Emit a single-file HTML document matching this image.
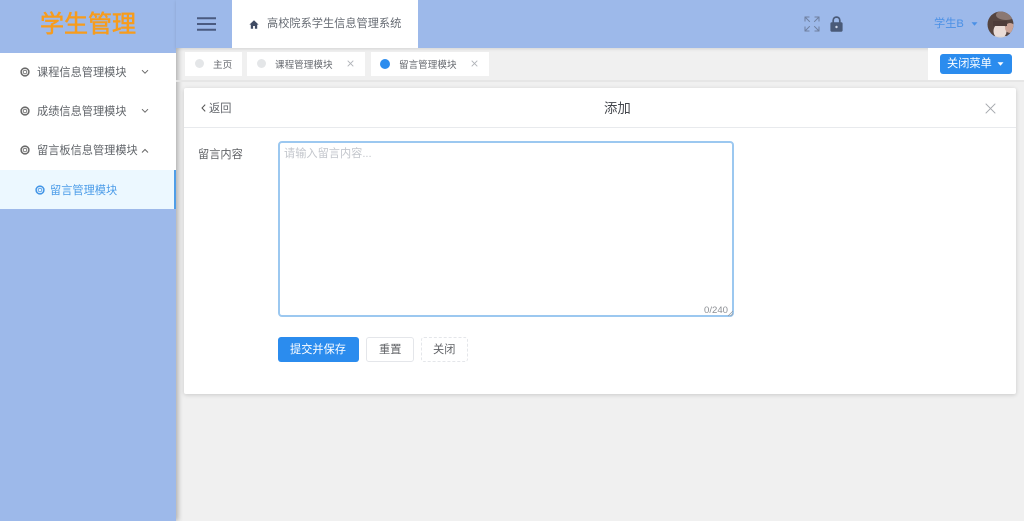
<!DOCTYPE html>
<html lang="zh">
<head>
<meta charset="utf-8">
<title>高校院系学生信息管理系统</title>
<style>
*{box-sizing:border-box}
html,body{margin:0;padding:0;width:1024px;height:521px;overflow:hidden;background:#f0f0f0;font-family:"Liberation Sans","Noto Sans CJK SC",sans-serif;color:#606266}
#w{position:absolute;left:0;top:0;width:1024px;height:521px;overflow:hidden;background:#f0f0f0;filter:blur(.35px)}
.a{position:absolute;white-space:nowrap}
.t{line-height:1;white-space:nowrap;position:absolute}
svg{position:absolute;display:block;overflow:visible}
</style>
</head>
<body>
<div id="w">
<!-- sidebar -->
<div class="a" style="left:0;top:0;width:176px;height:521px;background:#9db9ea;box-shadow:2px 0 5px rgba(0,0,0,.28)"></div>
<div class="t" style="left:40px;top:12.5px;font-size:24px;color:#f79c1c;-webkit-text-stroke:.6px #f79c1c">学生管理</div>
<div class="a" style="left:0;top:53px;width:176px;height:117px;background:#fff"></div>
<div class="a" style="left:0;top:170px;width:176px;height:39px;background:#ecf8ff;border-right:2px solid #4f9ee8"></div>

<svg style="left:20px;top:67px" width="10" height="10" viewBox="0 0 10 10"><circle cx="5" cy="5" r="3.9" fill="none" stroke="#666" stroke-width="1.5"/><circle cx="5" cy="5" r="1.8" fill="none" stroke="#777" stroke-width="1"/></svg>
<div class="t" style="left:37px;top:66px;font-size:11.2px;color:#5f6368;margin-top:1.6px">课程信息管理模块</div>
<svg style="left:141px;top:69px" width="8" height="6" viewBox="0 0 8 6"><path d="M1 1.2L4 4.2L7 1.2" fill="none" stroke="#666" stroke-width="1"/></svg>

<svg style="left:20px;top:106px" width="10" height="10" viewBox="0 0 10 10"><circle cx="5" cy="5" r="3.9" fill="none" stroke="#666" stroke-width="1.5"/><circle cx="5" cy="5" r="1.8" fill="none" stroke="#777" stroke-width="1"/></svg>
<div class="t" style="left:37px;top:105px;font-size:11.2px;color:#5f6368;margin-top:1.6px">成绩信息管理模块</div>
<svg style="left:141px;top:108px" width="8" height="6" viewBox="0 0 8 6"><path d="M1 1.2L4 4.2L7 1.2" fill="none" stroke="#666" stroke-width="1"/></svg>

<svg style="left:20px;top:145px" width="10" height="10" viewBox="0 0 10 10"><circle cx="5" cy="5" r="3.9" fill="none" stroke="#666" stroke-width="1.5"/><circle cx="5" cy="5" r="1.8" fill="none" stroke="#777" stroke-width="1"/></svg>
<div class="t" style="left:37px;top:144px;font-size:11.2px;color:#5f6368;margin-top:1.6px">留言板信息管理模块</div>
<svg style="left:141px;top:148px" width="8" height="6" viewBox="0 0 8 6"><path d="M1 4.5L4 1.5L7 4.5" fill="none" stroke="#666" stroke-width="1"/></svg>

<svg style="left:35px;top:185px" width="10" height="10" viewBox="0 0 10 10"><circle cx="5" cy="5" r="3.9" fill="none" stroke="#3f93e6" stroke-width="1.5"/><circle cx="5" cy="5" r="1.8" fill="none" stroke="#5ba2ea" stroke-width="1"/></svg>
<div class="t" style="left:50px;top:184px;font-size:11.2px;color:#4a9be8;margin-top:1.6px">留言管理模块</div>

<!-- header -->
<div class="a" style="left:176px;top:0;width:848px;height:48px;background:#9db9ea;box-shadow:0 1px 3px rgba(0,0,0,.12)"></div>
<div class="a" style="left:232px;top:0;width:186px;height:48px;background:#fff"></div>
<svg style="left:197px;top:17px" width="19" height="14" viewBox="0 0 19 14"><path d="M0 1.2H19M0 7H19M0 12.8H19" stroke="#4a5a80" stroke-width="2"/></svg>
<svg style="left:249px;top:20px" width="10" height="9" viewBox="0 0 10 9"><path d="M5 0.3L9.6 4.6H8.2V8.8H5.9V6H4.1V8.8H1.8V4.6H0.4Z" fill="#3f4a63"/></svg>
<div class="t" style="left:267px;top:19px;font-size:11.2px;color:#666b73">高校院系学生信息管理系统</div>

<svg style="left:804px;top:16px" width="16" height="16" viewBox="0 0 16 16" fill="none" stroke="#6f80a0" stroke-width="1"><path d="M1 5.5V1H5.5M1 1L5.8 5.8M15 5.5V1H10.5M15 1L10.2 5.8M1 10.5V15H5.5M1 15L5.8 10.2M15 10.5V15H10.5M15 15L10.2 10.2"/></svg>
<svg style="left:830px;top:16px" width="13" height="16" viewBox="0 0 13 16"><path d="M3.2 7V4.4C3.2 2.5 4.6 1.1 6.5 1.1S9.8 2.5 9.8 4.4V7" fill="none" stroke="#4a5a78" stroke-width="1.7"/><rect x="0.4" y="6.3" width="12.2" height="9.4" rx="1.4" fill="#4a5a78"/><circle cx="6.5" cy="11" r="1.2" fill="#cdd6e6"/></svg>

<div class="t" style="left:934px;top:18.5px;font-size:11.2px;color:#4a90e6">学生B</div>
<svg style="left:971px;top:22px" width="7" height="4" viewBox="0 0 7 4"><path d="M0.5 0.3H6.5L3.5 3.7Z" fill="#4a90e6"/></svg>
<svg style="left:987px;top:11px" width="27" height="27" viewBox="0 0 27 27">
<defs><clipPath id="av"><circle cx="13.5" cy="13.5" r="13"/></clipPath></defs>
<g clip-path="url(#av)">
<rect width="27" height="27" fill="#55443f"/>
<ellipse cx="19" cy="4" rx="10" ry="5" fill="#8b7872"/>
<ellipse cx="13" cy="20" rx="6.5" ry="7.5" fill="#eadcd6"/>
<ellipse cx="23" cy="17" rx="5" ry="5" fill="#c9a397"/>
<rect x="6" y="10" width="14" height="5" fill="#4d3c39"/>
<rect x="0" y="25" width="27" height="2" fill="#e0d8d4"/>
</g>
</svg>

<!-- tabs -->
<div class="a" style="left:176px;top:80px;width:848px;height:2px;background:#e6e6e6"></div>
<div class="a" style="left:185px;top:52px;width:57px;height:24px;background:#fff"></div>
<div class="a" style="left:195px;top:59px;width:9px;height:9px;border-radius:50%;background:#e4e6e8"></div>
<div class="t" style="left:213px;top:60.5px;font-size:9.6px;color:#66696f">主页</div>

<div class="a" style="left:247px;top:52px;width:118px;height:24px;background:#fff"></div>
<div class="a" style="left:257px;top:59px;width:9px;height:9px;border-radius:50%;background:#e4e6e8"></div>
<div class="t" style="left:275px;top:60.5px;font-size:9.6px;color:#66696f">课程管理模块</div>
<svg style="left:347px;top:60px" width="7" height="7" viewBox="0 0 7 7"><path d="M.7 .7L6.3 6.3M6.3 .7L.7 6.3" stroke="#b0b3b8" stroke-width=".9"/></svg>

<div class="a" style="left:371px;top:52px;width:118px;height:24px;background:#fff"></div>
<div class="a" style="left:380px;top:59px;width:10px;height:10px;border-radius:50%;background:#2b8cee"></div>
<div class="t" style="left:399px;top:60.5px;font-size:9.6px;color:#66696f">留言管理模块</div>
<svg style="left:471px;top:60px" width="7" height="7" viewBox="0 0 7 7"><path d="M.7 .7L6.3 6.3M6.3 .7L.7 6.3" stroke="#b0b3b8" stroke-width=".9"/></svg>

<div class="a" style="left:928px;top:48px;width:96px;height:32px;background:#fff"></div>
<div class="a" style="left:940px;top:54px;width:72px;height:20px;background:#2b8cee;border-radius:3px"></div>
<div class="t" style="left:947px;top:58.5px;font-size:11.2px;color:#fff">关闭菜单</div>
<svg style="left:997px;top:62px" width="7" height="4" viewBox="0 0 7 4"><path d="M0.5 0.3H6.5L3.5 3.7Z" fill="#fff"/></svg>

<!-- card -->
<div class="a" style="left:184px;top:88px;width:832px;height:306px;background:#fff;border-radius:2px;box-shadow:0 1px 4px rgba(0,0,0,.16)"></div>
<div class="a" style="left:184px;top:127px;width:832px;height:1px;background:#e8eaed"></div>
<svg style="left:201px;top:104px" width="5" height="8" viewBox="0 0 5 8"><path d="M4.2 .6L1 4L4.2 7.4" fill="none" stroke="#555" stroke-width="1"/></svg>
<div class="t" style="left:209px;top:103.5px;font-size:11.2px;color:#62656b">返回</div>
<div class="t" style="left:604px;top:102px;font-size:13.4px;color:#44474d">添加</div>
<svg style="left:985px;top:103px" width="11" height="11" viewBox="0 0 11 11"><path d="M.7 .7L10.3 10.3M10.3 .7L.7 10.3" stroke="#a5a8ad" stroke-width="1"/></svg>

<div class="t" style="left:198px;top:149.5px;font-size:11.2px;color:#606266">留言内容</div>
<div class="a" style="left:278px;top:141px;width:456px;height:176px;background:#fff;border:2px solid #9cc8f0;border-radius:4px"></div>
<div class="t" style="left:284px;top:148.5px;font-size:11.2px;color:#c3c6cc">请输入留言内容...</div>
<div class="t" style="left:704px;top:305.5px;font-size:9.6px;color:#8c8f94">0/240</div>
<svg style="left:728px;top:311px" width="5" height="5" viewBox="0 0 5 5"><path d="M0 5L5 0M2.5 5L5 2.5" stroke="#909399" stroke-width=".7"/></svg>

<div class="a" style="left:278px;top:337px;width:81px;height:25px;background:#2b8cee;border-radius:3px"></div>
<div class="t" style="left:290px;top:344.5px;font-size:11.2px;color:#fff">提交并保存</div>
<div class="a" style="left:366px;top:337px;width:48px;height:25px;background:#fff;border:1px solid #e4e6ea;border-radius:3px"></div>
<div class="t" style="left:379px;top:344.5px;font-size:11.2px;color:#606266">重置</div>
<div class="a" style="left:421px;top:337px;width:47px;height:25px;background:#fff;border:1px dashed #e4e6ea;border-radius:3px"></div>
<div class="t" style="left:433px;top:344.5px;font-size:11.2px;color:#606266">关闭</div>
</div>
</body>
</html>
